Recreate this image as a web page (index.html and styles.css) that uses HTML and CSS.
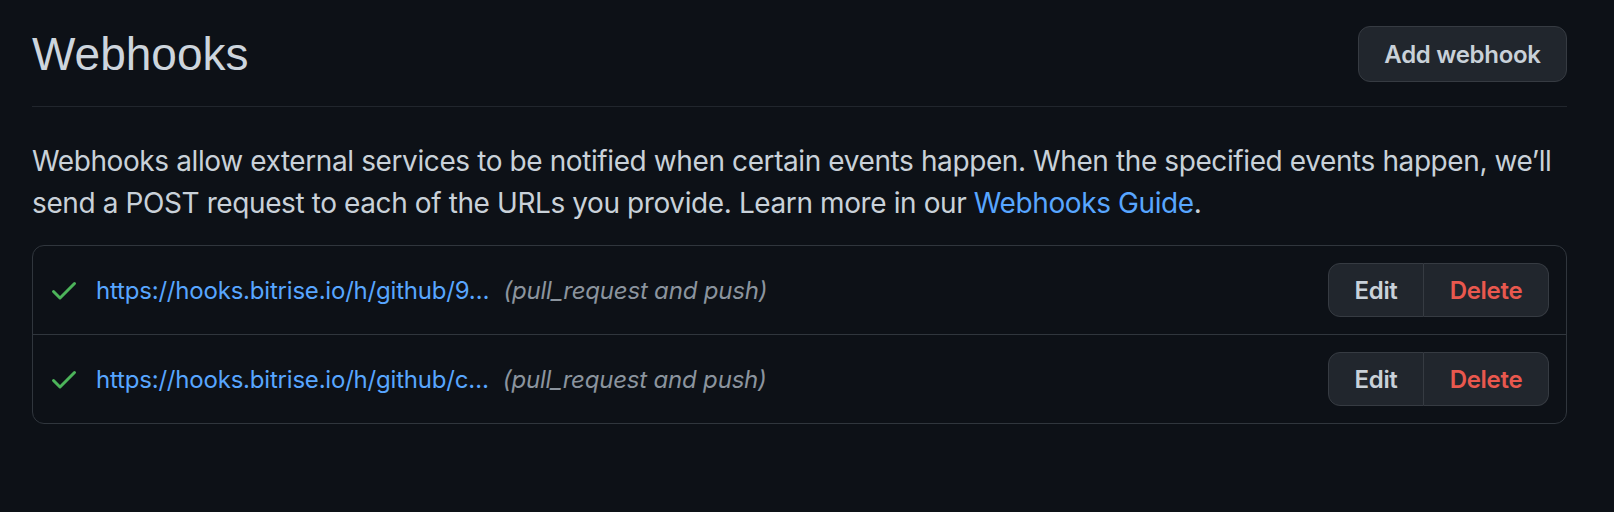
FILE: index.html
```html
<!DOCTYPE html>
<html lang="en">
<head>
<meta charset="utf-8">
<title>Webhooks</title>
<link rel="stylesheet" href="styles.css">
</head>
<body>
<div class="page">
  <div class="subhead">
    <h2 class="subhead-heading">Webhooks</h2>
    <a class="btn btn-add" href="#">Add webhook</a>
  </div>
  <p class="intro">Webhooks allow external services to be notified when certain events happen. When the specified events happen, we’ll send a POST request to each of the URLs you provide. Learn more in our <a class="link" href="#">Webhooks Guide</a>.</p>
  <div class="box">
    <div class="box-row">
      <svg class="check" viewBox="0 0 16 16" width="32" height="32" aria-hidden="true"><path d="M13.78 4.22a.75.75 0 0 1 0 1.06l-7.25 7.25a.75.75 0 0 1-1.06 0L2.22 9.28a.751.751 0 0 1 .018-1.042.751.751 0 0 1 1.042-.018L6 10.94l6.72-6.72a.75.75 0 0 1 1.06 0Z"></path></svg>
      <a class="hook-url" href="#">https://hooks.bitrise.io/h/github/9…</a>
      <em class="hook-events">(pull_request and push)</em>
      <div class="btn-group">
        <a class="btn btn-sm" href="#">Edit</a>
        <a class="btn btn-sm btn-danger" href="#">Delete</a>
      </div>
    </div>
    <div class="box-row">
      <svg class="check" viewBox="0 0 16 16" width="32" height="32" aria-hidden="true"><path d="M13.78 4.22a.75.75 0 0 1 0 1.06l-7.25 7.25a.75.75 0 0 1-1.06 0L2.22 9.28a.751.751 0 0 1 .018-1.042.751.751 0 0 1 1.042-.018L6 10.94l6.72-6.72a.75.75 0 0 1 1.06 0Z"></path></svg>
      <a class="hook-url" href="#">https://hooks.bitrise.io/h/github/c…</a>
      <em class="hook-events">(pull_request and push)</em>
      <div class="btn-group">
        <a class="btn btn-sm" href="#">Edit</a>
        <a class="btn btn-sm btn-danger" href="#">Delete</a>
      </div>
    </div>
  </div>
</div>
</body>
</html>
```
FILE: styles.css
```css
html, body {
  margin: 0;
  background: #0d1117;
}
body {
  font-family: Inter, "Noto Sans", sans-serif;
  color: #c9d1d9;
}
a { text-decoration: none; }
.page {
  padding: 26px 47px 0 32px;
}
.subhead {
  display: flex;
  align-items: center;
  justify-content: space-between;
  padding-bottom: 24px;
  border-bottom: 1px solid #21262d;
}
.subhead-heading {
  margin: 0;
  font-family: "Liberation Sans", Arial, sans-serif;
  font-weight: 400;
  font-size: 46px;
  line-height: 56px;
  color: #cdd5dd;
}
.btn {
  display: inline-flex;
  align-items: center;
  justify-content: center;
  box-sizing: border-box;
  font-family: Inter, sans-serif;
  font-weight: 600;
  font-size: 24px;
  letter-spacing: -0.3px;
  color: #c9d1d9;
  background: #21262d;
  border: 1px solid #363b42;
}
.btn-add {
  height: 56px;
  width: 209px;
  border-radius: 12px;
}
.intro {
  margin: 33px 0 21px;
  font-size: 28px;
  line-height: 42px;
  letter-spacing: -0.4px;
}
.link { color: #58a6ff; }
.box {
  border: 1px solid #30363d;
  border-radius: 12px;
}
.box-row {
  display: flex;
  align-items: center;
  padding: 17px 17px 17px 15px;
  font-size: 24px;
  letter-spacing: -0.2px;
}
.box-row + .box-row {
  border-top: 1px solid #30363d;
}
.check {
  fill: #4cb45a;
  flex: none;
  margin-right: 16px;
}
.hook-url {
  color: #58a6ff;
  margin-right: 14px;
}
.hook-events {
  color: #8b949e;
}
.btn-group {
  display: flex;
  margin-left: auto;
}
.btn-sm {
  height: 54px;
  width: 96px;
}
.btn-sm.btn-danger {
  width: 125px;
}
.btn-group .btn-sm:first-child {
  border-radius: 12px 0 0 12px;
}
.btn-group .btn-sm:last-child {
  border-radius: 0 12px 12px 0;
  border-left: 0;
}
.btn-danger { color: #e9584e; }
```
